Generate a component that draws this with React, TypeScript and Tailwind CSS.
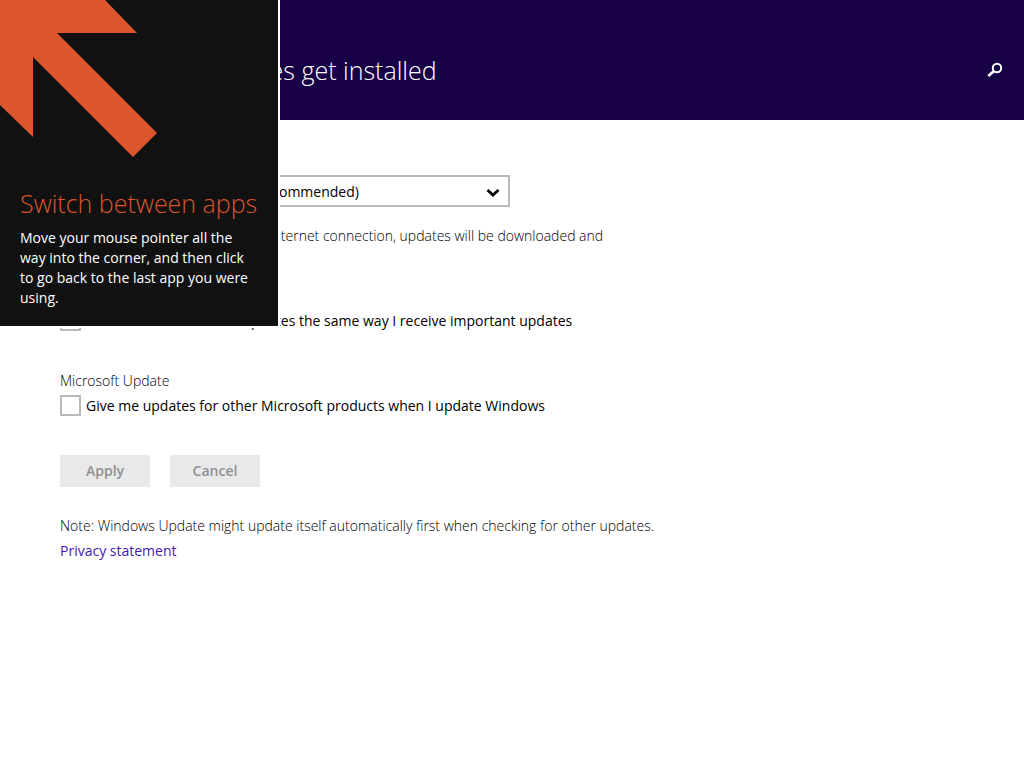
import type { ReactNode } from "react";

function SearchIcon() {
  return (
    <svg width="16" height="16" viewBox="0 0 16 16" fill="none" stroke="white" aria-hidden="true">
      <circle cx="10" cy="6" r="4.2" strokeWidth="2" />
      <path d="M7 9 1.3 14" strokeWidth="2.8" />
    </svg>
  );
}

function CornerArrow() {
  return (
    <svg width="160" height="160" viewBox="0 0 160 160" fill="#db552d" aria-hidden="true">
      <path d="M0 0H105L137 33H57L157 133L133 157L33 57V137L0 105Z" />
    </svg>
  );
}

function CheckRow({ id, children }: { id: string; children: ReactNode }) {
  return (
    <div className="flex items-center gap-[5px]">
      <input
        id={id}
        type="checkbox"
        className="size-[21px] shrink-0 appearance-none border-2 border-[#b8b8b8] bg-white checked:bg-[#4617b4]"
      />
      <label htmlFor={id}>{children}</label>
    </div>
  );
}

function SwitchAppsTip() {
  return (
    <aside className="absolute left-0 top-0 w-[280px] border-b-2 border-r-2 border-white bg-[#111111] pb-[18px] text-white">
      <CornerArrow />
      <div className="px-5 pt-[27px]">
        <h2 className="whitespace-nowrap text-[25px] font-light leading-8 text-[#db552d]">
          Switch between apps
        </h2>
        <p className="mt-[9px] text-sm leading-5">
          Move your mouse pointer all the way into the corner, and then click to go back to the last
          app you were using.
        </p>
      </div>
    </aside>
  );
}

export default function App() {
  return (
    <div className="relative min-h-screen bg-white font-['Open_Sans','Noto_Sans',sans-serif] text-sm leading-5 text-black">
      <header className="flex h-[120px] items-center justify-between bg-[#180046] pb-6 pl-[58px] pr-[21px] pt-11 text-white">
        <h1 className="text-[25px] font-light leading-8">Choose how updates get installed</h1>
        <button type="button" aria-label="Search">
          <SearchIcon />
        </button>
      </header>

      <main className="px-[60px] pt-[55px]">
        <div className="relative w-[450px] max-w-full">
          <select
            aria-label="Important updates"
            className="h-8 w-full appearance-none border-2 border-[#b8b8b8] bg-white px-0.5 pt-0.5"
          >
            <option>Install updates automatically (recommended)</option>
            <option>Never check for updates</option>
          </select>
          <svg
            className="pointer-events-none absolute right-[10px] top-[13px]"
            width="14"
            height="10"
            viewBox="0 0 14 10"
            fill="none"
            stroke="black"
            strokeWidth="2.8"
            aria-hidden="true"
          >
            <path d="M1.5 2 7 7 12.5 2" />
          </svg>
        </div>

        <p className="mt-[19px] max-w-[560px] font-light">
          When you are on a non-metered Internet connection, updates will be downloaded and
          installed automatically.
        </p>

        <section className="mt-5">
          <h2 className="font-light">Recommended updates</h2>
          <div className="mt-1">
            <CheckRow id="recommended">
              Give me recommended updates the same way I receive important updates
            </CheckRow>
          </div>
        </section>

        <section className="mt-10">
          <h2 className="font-light">Microsoft Update</h2>
          <div className="mt-1">
            <CheckRow id="other-products">
              Give me updates for other Microsoft products when I update Windows
            </CheckRow>
          </div>
        </section>

        <div className="mt-[39px] flex gap-5">
          <button type="button" disabled className="h-8 w-[90px] bg-[#e9e9e9] font-semibold text-[#919191]">
            Apply
          </button>
          <button type="button" disabled className="h-8 w-[90px] bg-[#e9e9e9] font-semibold text-[#919191]">
            Cancel
          </button>
        </div>

        <p className="mt-[29px] font-light">
          Note: Windows Update might update itself automatically first when checking for other updates.
        </p>
        <a href="#privacy" className="mt-[5px] inline-block text-[#4617b4]">
          Privacy statement
        </a>
      </main>

      <SwitchAppsTip />
    </div>
  );
}
